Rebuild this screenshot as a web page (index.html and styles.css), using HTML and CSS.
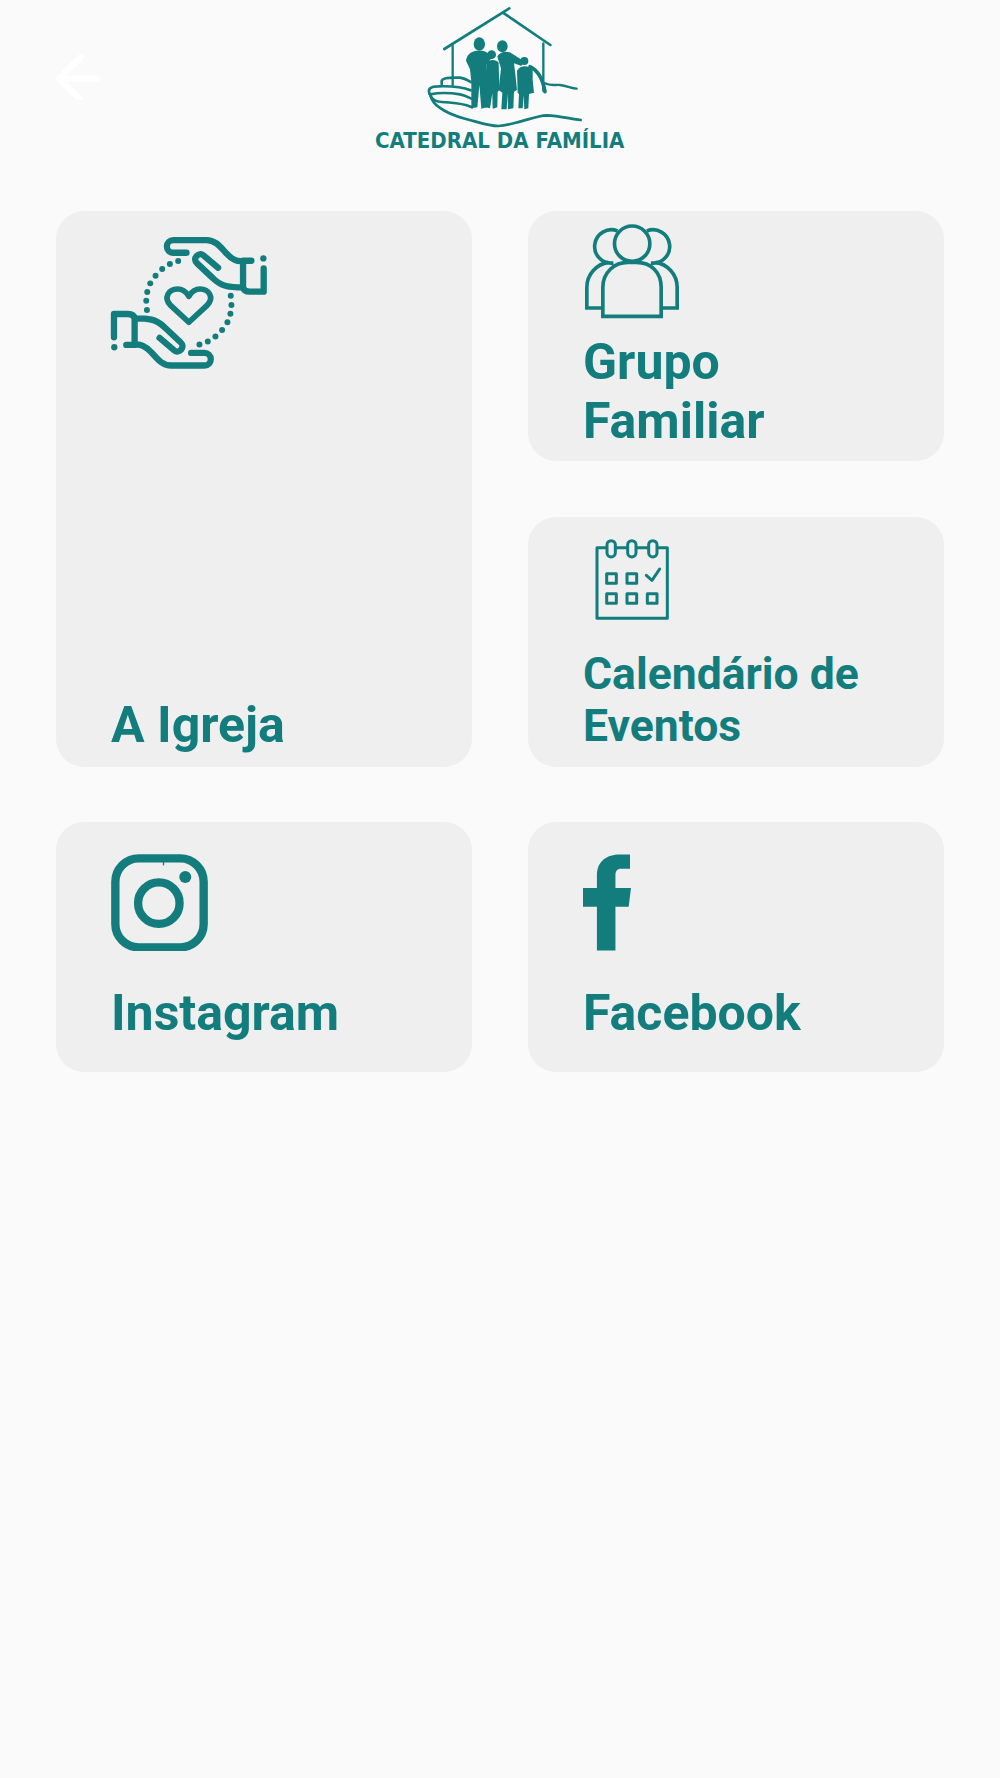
FILE: index.html
```html
<!DOCTYPE html>
<html lang="pt-BR">
<head>
  <meta charset="UTF-8">
  <title>Catedral da Família</title>
  <link rel="stylesheet" href="styles.css">
</head>
<body>
  <header class="top">
    <a class="back" href="#" aria-label="Voltar">
      <svg viewBox="0 0 46 46" width="46" height="46"><path d="M25 3 L3 24.500 L25 46 M3 24.500 H41" fill="none" stroke="#fff" stroke-width="6" stroke-linecap="round" stroke-linejoin="round"/></svg>
    </a>
    <svg class="logo" viewBox="0 0 900 480" width="300" height="160">
      <g fill="none" stroke="#137d7d" stroke-linecap="round">
        <path d="M283 147 L478 25 M462 40 L601 135" stroke-width="8"/>
        <path d="M308 137 V255 M580 130 V272" stroke-width="7"/>
        <path d="M540 200 C565 212 578 235 585 275" stroke-width="11"/>
        <path d="M585 250 C600 258 615 254 630 255 C650 257 665 265 680 266" stroke-width="7"/>
        <path d="M275 252 V243 C277 234 300 232 330 233 C345 235 352 240 362 246" stroke-width="8"/>
        <path d="M240 283 C230 265 245 259 265 259 C300 258 340 262 362 271" stroke-width="8"/>
        <path d="M240 283 C260 279 300 278 330 283 C345 286 352 290 364 296" stroke-width="8"/>
        <path d="M240 283 C245 298 255 305 275 306 C300 307 330 310 350 316 L366 322" stroke-width="8"/>
        <path d="M240 283 C245 302 255 314 268 322 C285 335 315 348 345 356 C385 366 415 378 445 378 C470 377 490 370 510 365 C540 357 565 347 590 346 C625 347 660 356 692 360" stroke-width="8"/>
      </g>
      <g fill="#137d7d">
        <ellipse cx="388" cy="132" rx="17" ry="20"/>
        <ellipse cx="457" cy="139" rx="16" ry="18"/>
        <circle cx="425" cy="164" r="13"/>
        <circle cx="523" cy="183" r="12"/>
        <path d="M348 182 C350 165 362 155 378 152 L398 152 C412 156 418 160 425 174 L410 192 L408 240 L411 322 L394 326 L388 255 L382 322 L364 325 L364 245 L360 208 Z"/>
        <path d="M410 188 C416 178 438 176 446 188 L447 225 L449 270 L443 275 L442 322 L428 326 L427 280 L420 325 L406 322 L408 272 L404 266 Z"/>
        <path d="M442 170 C448 156 468 152 482 158 L522 184 L514 198 L492 190 L497 230 L501 270 L492 275 L490 325 L474 328 L473 280 L470 328 L454 328 L457 278 L446 270 L453 205 Z"/>
        <path d="M501 212 C510 196 535 194 548 210 L548 240 L552 278 L537 282 L535 325 L523 328 L521 285 L518 325 L505 325 L507 282 L503 278 Z"/>
        <text class="logo-text" x="75" y="443" textLength="748" lengthAdjust="spacingAndGlyphs">CATEDRAL DA FAMÍLIA</text>
      </g>
    </svg>
  </header>

  <main class="menu">
    <a class="card card-tall" href="#">
      <svg class="icon icon-hands" viewBox="210 105 475 405" width="158" height="135">
        <defs>
          <g id="hand">
            <path d="M440 158 H400 A19 19 0 0 1 400 120 H500 C530 120 545 145 560 160 C575 177 595 187 610 182 H635 M535 203 L490 165 C478 155 455 175 472 190 L520 235 C545 260 570 262 610 262 M610 182 V262 C612 272 620 275 630 275 H672 V205"/>
            <circle cx="671" cy="175" r="9.500" fill="#137d7d" stroke="none"/>
            <g fill="#137d7d" stroke="none">
              <circle cx="415" cy="183" r="9"/><circle cx="390" cy="192" r="9"/><circle cx="367" cy="207" r="9"/><circle cx="347" cy="227" r="9"/><circle cx="331" cy="250" r="9"/><circle cx="322" cy="276" r="9"/><circle cx="319" cy="302" r="9"/><circle cx="321" cy="330" r="9"/>
            </g>
          </g>
        </defs>
        <g fill="none" stroke="#137d7d" stroke-width="19" stroke-linecap="round" stroke-linejoin="round">
          <use href="#hand"/>
          <use href="#hand" transform="rotate(180 447 308.500)"/>
          <path d="M447 367 L393 317 C368 292 388 267 413 267 C428 267 440 277 447 289 C454 277 466 267 481 267 C506 267 526 292 501 317 Z" stroke-width="17"/>
        </g>
      </svg>
      <span class="label label-tall">A Igreja</span>
    </a>

    <a class="card" href="#">
      <svg class="icon icon-group" viewBox="60 30 320 300" width="107" height="100">
        <g fill="none" stroke="#137d7d" stroke-width="11">
          <circle cx="216" cy="104" r="53"/>
          <path d="M172 66 A50 50 0 1 0 160 162 M260 66 A50 50 0 1 1 272 162"/>
          <path d="M128 322 V235 C128 190 163 160 203 160 H228 C273 160 303 190 303 235 V322 Z"/>
          <path d="M128 297 H80 V235 C80 195 110 165 145 160 M303 297 H351 V235 C351 195 321 165 286 160"/>
        </g>
      </svg>
      <span class="label label-group">Grupo<br>Familiar</span>
    </a>

    <a class="card" href="#">
      <svg class="icon icon-calendar" viewBox="65 35 240 255" width="80" height="85">
        <g fill="none" stroke="#137d7d" stroke-width="9" stroke-linejoin="round">
          <rect x="80" y="67" width="211" height="212"/>
          <g fill="#efefef">
            <rect x="110" y="46" width="25" height="49" rx="12.500"/>
            <rect x="172" y="46" width="25" height="49" rx="12.500"/>
            <rect x="235" y="46" width="25" height="49" rx="12.500"/>
          </g>
          <rect x="109" y="145" width="29" height="29"/>
          <rect x="170" y="145" width="29" height="29"/>
          <rect x="109" y="205" width="29" height="29"/>
          <rect x="170" y="205" width="29" height="29"/>
          <rect x="231" y="205" width="29" height="29"/>
          <path d="M228 150 L245 165 L268 131" stroke-linecap="round"/>
        </g>
      </svg>
      <span class="label label-small">Calendário de<br>Eventos</span>
    </a>

    <a class="card" href="#">
      <svg class="icon icon-social" viewBox="35 40 290 290" width="97" height="97">
        <g fill="none" stroke="#137d7d">
          <rect x="48" y="53" width="264" height="266" rx="70" stroke-width="25"/>
          <circle cx="178" cy="187" r="62" stroke-width="25"/>
          <path d="M192 62 V74" stroke-width="4"/>
        </g>
        <circle cx="257" cy="109" r="18" fill="#137d7d"/>
      </svg>
      <span class="label">Instagram</span>
    </a>

    <a class="card" href="#">
      <svg class="icon icon-social" viewBox="40 42 145 290" width="48" height="97">
        <path d="M82 332 V200 H40 V143 H82 V105 C82 60 115 42 150 42 H182 V85 H155 C143 85 138 92 138 105 V143 H185 L178 200 H138 V332 Z" fill="#137d7d"/>
      </svg>
      <span class="label">Facebook</span>
    </a>
  </main>
</body>
</html>
```

FILE: styles.css
```css
body {
  margin: 0;
  height: 1778px;
  background-color: #fafafa;
  font-family: 'Roboto', sans-serif;
  overflow: hidden;
}

a {
  text-decoration: none;
}

.top {
  display: grid;
  grid-template-columns: 1fr auto 1fr;
  align-items: start;
  height: 211px;
  padding-left: 56px;
  padding-right: 56px;
  box-sizing: border-box;
}

.back {
  display: block;
  width: 46px;
  height: 46px;
  margin-top: 54px;
}

.logo {
  display: block;
}

.logo-text {
  font-family: 'DejaVu Sans', sans-serif;
  font-weight: bold;
  font-size: 62px;
}

.menu {
  display: grid;
  grid-template-columns: 416px 416px;
  grid-auto-rows: 250px;
  column-gap: 56px;
  row-gap: 55.500px;
  padding: 0 56px;
}

.card {
  display: flex;
  flex-direction: column;
  box-sizing: border-box;
  padding: 0 30px 0 55px;
  background-color: #efefef;
  border-radius: 28px;
  color: #137d7d;
}

.card-tall {
  grid-row: span 2;
}

.icon {
  display: block;
  flex: none;
}

.icon-hands {
  margin-top: 24px;
  margin-left: -1px;
}

.icon-group {
  margin-top: 8px;
  margin-left: -3px;
}

.icon-calendar {
  margin-top: 20px;
  margin-left: 9px;
}

.icon-social {
  margin-top: 32px;
}

.label {
  display: block;
  margin-top: 33px;
  font-size: 50px;
  font-weight: 700;
  line-height: 59px;
}

.label-tall {
  margin-top: auto;
  margin-bottom: 12px;
}

.label-group {
  margin-top: 14px;
}

.label-small {
  margin-top: 26px;
  font-size: 44.500px;
  line-height: 52px;
}
```
